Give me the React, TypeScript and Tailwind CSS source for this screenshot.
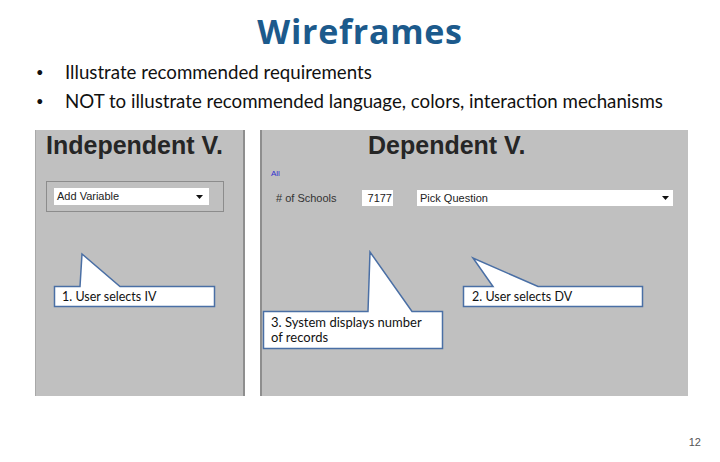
import React from "react"

function Arrow() {
  return (
    <svg width="7" height="4" viewBox="0 0 7 4" className="shrink-0">
      <path d="M0 0 L7 0 L3.5 4 Z" fill="#111" />
    </svg>
  )
}

export default function App() {
  return (
    <div className="relative w-[720px] h-[462px] bg-white overflow-hidden font-['Lato','Open_Sans',sans-serif]">
      <h1 className="pt-[11px] text-center text-[34px] leading-[40px] tracking-[0.7px] font-bold text-[#1c5a8c] font-['Open_Sans',sans-serif]">
        Wireframes
      </h1>

      <ul className="mt-[7px] text-[18.7px] leading-[29px] text-[#111]">
        <li className="flex items-center">
          <span className="w-[65px] pl-[36px] text-[13px]">•</span>
          <span>Illustrate recommended requirements</span>
        </li>
        <li className="flex items-center">
          <span className="w-[65px] pl-[36px] text-[13px]">•</span>
          <span>NOT to illustrate recommended language, colors, interaction mechanisms</span>
        </li>
      </ul>

      <div className="mt-[14px] flex gap-[15px] pl-[35px] font-['Liberation_Sans',Arial,sans-serif]">
        {/* Independent variable panel */}
        <div className="relative w-[210px] h-[266px] bg-[#c0c0c0] border-l border-l-[#a8a8a8] border-r-2 border-r-[#8e8e8e] pl-[10px]">
          <h2 className="mt-[1px] text-[25px] leading-[28px] font-bold text-[#262626]">Independent V.</h2>
          <div className="mt-[22px] w-[178px] h-[31px] border border-[#8c8c8c] pl-[7px] pt-[6px]">
            <div className="w-[155px] h-[17px] bg-white flex items-center justify-between pl-[3px] pr-[6px] text-[11px] text-[#222]">
              <span>Add Variable</span>
              <Arrow />
            </div>
          </div>

          <svg className="absolute left-[-1px] top-0" width="210" height="266">
            <polygon
              points="19.5,156.5 45,156.5 47,124 85,156.5 179.5,156.5 179.5,176.5 19.5,176.5"
              fill="white"
              stroke="#4a6fa5"
              strokeWidth="1.5"
            />
          </svg>
          <p className="absolute left-[26px] top-[158px] text-[12.5px] leading-[17px] text-[#111] font-['Lato','Open_Sans',sans-serif]">
            1. User selects IV
          </p>
        </div>

        {/* Dependent variable panel */}
        <div className="relative w-[428px] h-[266px] bg-[#c0c0c0] border-l-2 border-l-[#8e8e8e]">
          <h2 className="mt-[1px] pl-[106px] text-[25px] leading-[28px] font-bold text-[#262626]">Dependent V.</h2>
          <p className="mt-[9px] pl-[9px] text-[8px] leading-[12px] text-[#3030d0]">All</p>
          <div className="mt-[10px] flex items-center pl-[14px] text-[11px] text-[#333]">
            <span className="w-[86px]">&#35; of Schools</span>
            <div className="w-[31px] h-[16px] bg-white text-right pr-[1px] leading-[16px] text-[#222]">7177</div>
            <div className="ml-[24px] w-[256px] h-[16px] bg-white flex items-center justify-between pl-[3px] pr-[4px] text-[#222]">
              <span>Pick Question</span>
              <Arrow />
            </div>
          </div>

          <svg className="absolute left-[-2px] top-0" width="430" height="266">
            <polygon
              points="203.5,156.5 233,156.5 213,128 278,156.5 382.5,156.5 382.5,176.5 203.5,176.5"
              fill="white"
              stroke="#4a6fa5"
              strokeWidth="1.5"
            />
            <polygon
              points="3.5,181.5 108,181.5 110,122 152,181.5 182.5,181.5 182.5,218.5 3.5,218.5"
              fill="white"
              stroke="#4a6fa5"
              strokeWidth="1.5"
            />
          </svg>
          <p className="absolute left-[210px] top-[158px] text-[12.5px] leading-[17px] text-[#111] font-['Lato','Open_Sans',sans-serif]">
            2. User selects DV
          </p>
          <p className="absolute left-[9px] top-[185px] w-[175px] text-[13px] leading-[15px] text-[#111] font-['Lato','Open_Sans',sans-serif]">
            3. System displays number
            <br />
            of records
          </p>
        </div>
      </div>

      <p className="absolute right-[19px] top-[435px] text-[11px] leading-[14px] text-[#555] font-['Liberation_Sans',Arial,sans-serif]">12</p>
    </div>
  )
}
